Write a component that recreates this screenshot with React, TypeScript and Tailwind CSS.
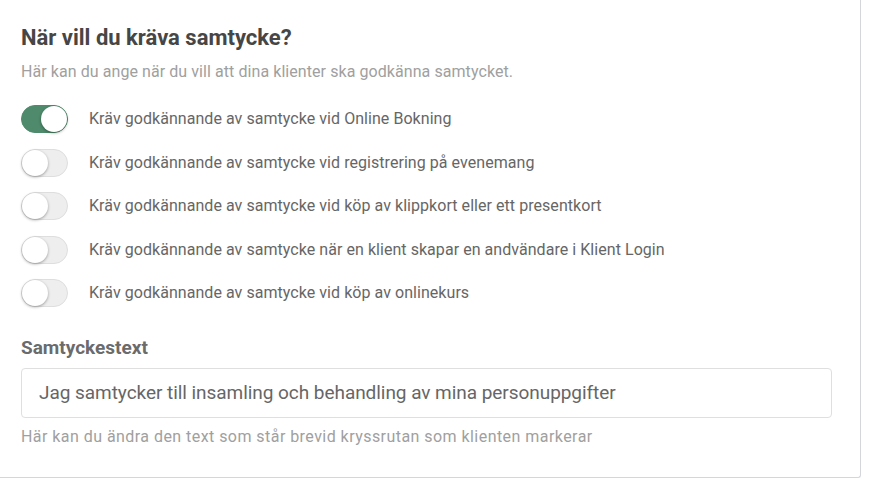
import { useState } from "react";

const options = [
  "Kräv godkännande av samtycke vid Online Bokning",
  "Kräv godkännande av samtycke vid registrering på evenemang",
  "Kräv godkännande av samtycke vid köp av klippkort eller ett presentkort",
  "Kräv godkännande av samtycke när en klient skapar en andvändare i Klient Login",
  "Kräv godkännande av samtycke vid köp av onlinekurs",
];

function Toggle({ on, onClick }: { on: boolean; onClick: () => void }) {
  return (
    <button
      onClick={onClick}
      className={`relative h-[28px] w-[47px] shrink-0 rounded-full border ${
        on ? "border-[#4e8a6b] bg-[#4e8a6b]" : "border-[#dedede] bg-[#eeeeee]"
      }`}
    >
      <span
        className={`absolute top-[0px] h-[26px] w-[26px] rounded-full bg-white shadow-[0_1px_3px_rgba(0,0,0,0.35)] ${
          on ? "left-[19px]" : "left-[0px]"
        }`}
      />
    </button>
  );
}

export default function App() {
  const [checked, setChecked] = useState([true, false, false, false, false]);

  return (
    <div className="h-[481px] w-[875px] overflow-hidden bg-white font-['Roboto',sans-serif]">
      <div className="h-[478px] w-[861px] rounded-br-[3px] border-r border-b border-[#d3d6da] bg-white pl-[21px] pt-[23px]">
        {/* Heading */}
        <h2 className="text-[22px] font-bold leading-[30px] text-[#464646]">När vill du kräva samtycke?</h2>
        <p className="mt-[8px] text-[16px] leading-[22px] tracking-[0.07px] text-[#a0a0a0]">
          Här kan du ange när du vill att dina klienter ska godkänna samtycket.
        </p>

        {/* Toggles */}
        <div className="mt-[22px] flex flex-col gap-[15.5px]">
          {options.map((label, i) => (
            <div key={i} className="flex items-center gap-[21px]">
              <Toggle
                on={checked[i]}
                onClick={() => setChecked(checked.map((c, j) => (j === i ? !c : c)))}
              />
              <span className="text-[16px] tracking-[0.05px] text-[#666666]">{label}</span>
            </div>
          ))}
        </div>

        {/* Consent text */}
        <h3 className="mt-[28px] text-[19px] font-bold leading-[26px] text-[#6b6b6b]">Samtyckestext</h3>
        <div className="mt-[7px] flex h-[50px] w-[811px] items-center rounded-[4px] border border-[#dfdfdf] px-[17px] text-[19px] tracking-[-0.05px] text-[#666666]">
          Jag samtycker till insamling och behandling av mina personuppgifter
        </div>
        <p className="mt-[8px] text-[16px] leading-[22px] tracking-[0.45px] text-[#a0a0a0]">
          Här kan du ändra den text som står brevid kryssrutan som klienten markerar
        </p>
      </div>
    </div>
  );
}
